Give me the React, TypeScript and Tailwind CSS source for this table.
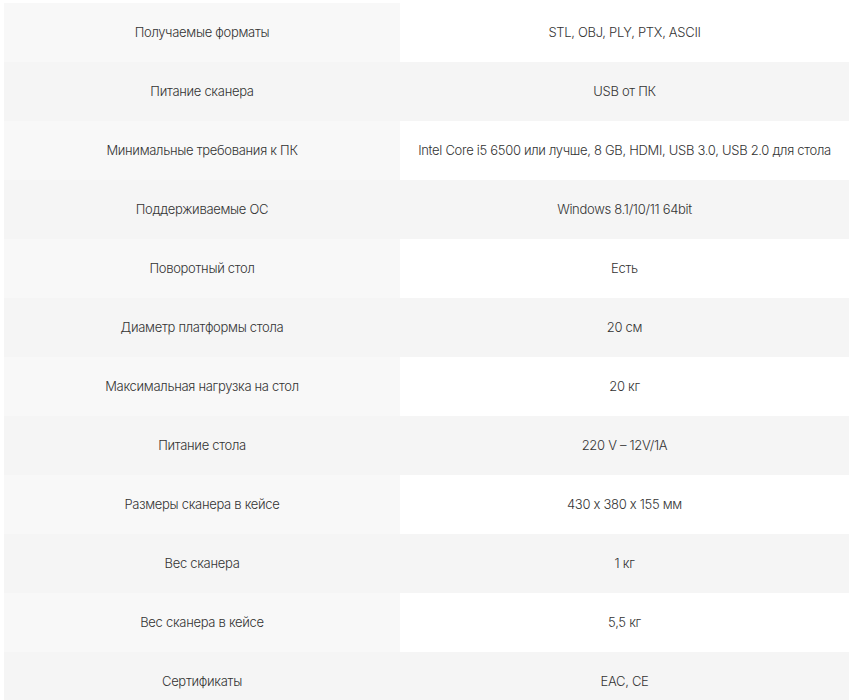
import React from 'react';

const specs: [string, string][] = [
  ['Получаемые форматы', 'STL, OBJ, PLY, PTX, ASCII'],
  ['Питание сканера', 'USB от ПК'],
  ['Минимальные требования к ПК', 'Intel Core i5 6500 или лучше, 8 GB, HDMI, USB 3.0, USB 2.0 для стола'],
  ['Поддерживаемые ОС', 'Windows 8.1/10/11 64bit'],
  ['Поворотный стол', 'Есть'],
  ['Диаметр платформы стола', '20 см'],
  ['Максимальная нагрузка на стол', '20 кг'],
  ['Питание стола', '220 V – 12V/1A'],
  ['Размеры сканера в кейсе', '430 x 380 x 155 мм'],
  ['Вес сканера', '1 кг'],
  ['Вес сканера в кейсе', '5,5 кг'],
  ['Сертификаты', 'EAC, CE'],
];

export default function App() {
  return (
    <div className="min-h-screen bg-white pt-[3px] pl-[4px] pr-[4px] font-['Inter',sans-serif] text-[13px] font-light tracking-[-0.3px] text-[#333] [font-feature-settings:'calt'_0]">
      <div className="flex flex-col">
        {specs.map(([name, value], i) => {
          const even = i % 2 === 1;
          return (
            <div key={name} className={`flex h-[59px] ${even ? 'bg-[#f5f5f5]' : 'bg-white'}`}>
              <div className={`flex w-[396px] items-center justify-center ${even ? '' : 'bg-[#f8f8f8]'}`}>
                {name}
              </div>
              <div className="flex flex-1 items-center justify-center whitespace-nowrap">{value}</div>
            </div>
          );
        })}
      </div>
    </div>
  );
}
